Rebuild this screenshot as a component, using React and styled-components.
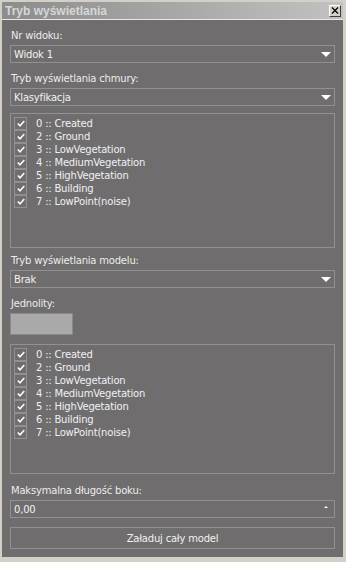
import React from 'react'
import styled, { createGlobalStyle } from 'styled-components'

const Global = createGlobalStyle`
  html, body { margin: 0; padding: 0; background: #d4d0c8; }
  body { font-family: "DejaVu Sans", sans-serif; }
`;

const Frame = styled.div`
  width: 346px;
  height: 562px;
  box-sizing: border-box;
  background: #d4d0c8;
  padding: 2px 3px 5px 2px;
  display: flex;
  flex-direction: column;
`;

const TitleBar = styled.div`
  height: 17px;
  display: flex;
  align-items: center;
  justify-content: space-between;
  padding: 0 2px 0 3px;
  background: linear-gradient(to right, #8c8c8c, #c2c2c2);
`;

const Title = styled.span`
  font-family: "Liberation Sans", sans-serif;
  font-weight: bold;
  font-size: 12px;
  color: #d6d6d6;
`;

const CloseButton = styled.div`
  width: 12px;
  height: 12px;
  box-sizing: border-box;
  background: #d4d0c8;
  border: 1px solid;
  border-color: #ffffff #404040 #404040 #ffffff;
  display: flex;
  align-items: center;
  justify-content: center;
`;

const Body = styled.div`
  flex: 1;
  background: #6f6d6d;
  border-top: 1px solid #e8e8e8;
  padding: 0 8px 8px 8px;
  display: flex;
  flex-direction: column;
`;

const Label = styled.div`
  font-size: 10px;
  color: #ececec;
  height: 13px;
  line-height: 13px;
  margin: ${p => p.$top}px 0 3px 1px;
  letter-spacing: -0.2px;
`;

const Field = styled.div`
  height: 18px;
  box-sizing: border-box;
  border: 1px solid #929090;
  display: flex;
  align-items: center;
  justify-content: space-between;
  padding: 0 3px 0 3px;
  font-size: 10px;
  color: #f2f2f2;
  letter-spacing: -0.2px;
`;

const Arrow = styled.div`
  width: 0;
  height: 0;
  border-left: 5px solid transparent;
  border-right: 5px solid transparent;
  border-top: 5px solid #ffffff;
`;

const SpinArrow = styled.div`
  width: 0;
  height: 0;
  border-left: 2px solid transparent;
  border-right: 2px solid transparent;
  border-bottom: 2px solid #ffffff;
  margin: 0 3px 5px 0;
`;

const ListBox = styled.div`
  height: ${p => p.$h}px;
  box-sizing: border-box;
  border: 1px solid #929090;
  margin-top: ${p => p.$top}px;
  padding: 3px 3px;
  display: flex;
  flex-direction: column;
`;

const Item = styled.div`
  display: flex;
  align-items: center;
  height: 13px;
  gap: 9px;
  font-size: 10px;
  color: #f0f0f6;
  letter-spacing: -0.2px;
`;

const Check = styled.div`
  width: 13px;
  height: 13px;
  box-sizing: border-box;
  border: 1px solid #929090;
  display: flex;
  align-items: center;
  justify-content: center;
`;

const Swatch = styled.div`
  width: 63px;
  height: 22px;
  box-sizing: border-box;
  background: #a9a9a9;
  border: 1px solid #8a8888;
`;

const Button = styled.div`
  height: 22px;
  box-sizing: border-box;
  border: 1px solid #929090;
  margin-top: 9px;
  display: flex;
  align-items: center;
  justify-content: center;
  font-size: 10px;
  color: #f2f2f2;
  letter-spacing: -0.2px;
`;

const classes = [
  '0 :: Created',
  '2 :: Ground',
  '3 :: LowVegetation',
  '4 :: MediumVegetation',
  '5 :: HighVegetation',
  '6 :: Building',
  '7 :: LowPoint(noise)',
]

const Tick = () => (
  <svg width="8" height="7" viewBox="0 0 8 7">
    <path d="M0.8 3.5 L3 5.8 L7.3 1" stroke="#ffffff" strokeWidth="1.5" fill="none" />
  </svg>
)

const ClassList = ({ h, top }) => (
  <ListBox $h={h} $top={top}>
    {classes.map(c => (
      <Item key={c}>
        <Check><Tick /></Check>
        <span>{c}</span>
      </Item>
    ))}
  </ListBox>
)

const Combo = ({ value }) => (
  <Field>
    <span>{value}</span>
    <Arrow />
  </Field>
)

export default function App() {
  return (
    <>
      <Global />
      <Frame>
        <TitleBar>
          <Title>Tryb wyświetlania</Title>
          <CloseButton>
            <svg width="8" height="7" viewBox="0 0 8 7">
              <path d="M1 0.5 L7 6.5 M7 0.5 L1 6.5" stroke="#000" strokeWidth="1.2" />
            </svg>
          </CloseButton>
        </TitleBar>
        <Body>
          <Label $top={9}>Nr widoku:</Label>
          <Combo value="Widok 1" />
          <Label $top={9}>Tryb wyświetlania chmury:</Label>
          <Combo value="Klasyfikacja" />
          <ClassList h={135} top={7} />
          <Label $top={6}>Tryb wyświetlania modelu:</Label>
          <Combo value="Brak" />
          <Label $top={9}>Jednolity:</Label>
          <Swatch />
          <ClassList h={130} top={9} />
          <Label $top={10}>Maksymalna długość boku:</Label>
          <Field>
            <span>0,00</span>
            <SpinArrow />
          </Field>
          <Button>Załaduj cały model</Button>
        </Body>
      </Frame>
    </>
  )
}
